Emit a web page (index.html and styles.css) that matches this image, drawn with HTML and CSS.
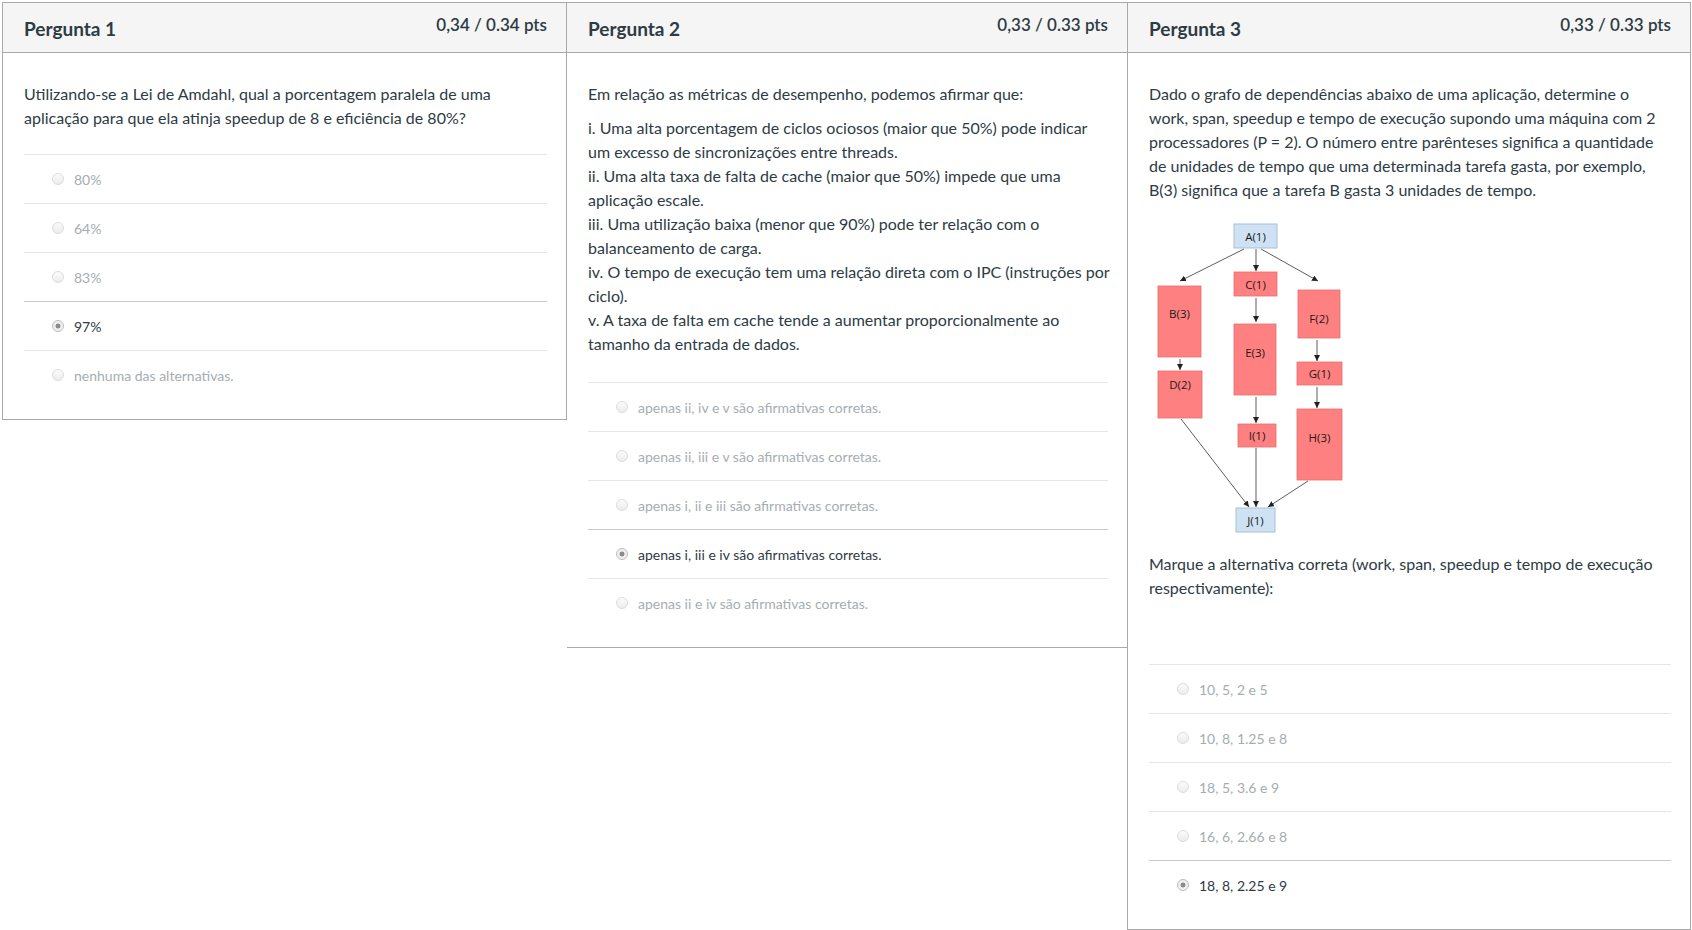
FILE: index.html
```html
<!DOCTYPE html>
<html lang="pt-BR">
<head>
<meta charset="utf-8">
<title>Quiz</title>
<link rel="stylesheet" href="styles.css">
</head>
<body>
<div class="quiz">
  <section class="q q1">
    <header class="q-head">
      <h2 class="q-title">Pergunta 1</h2>
      <span class="pts">0,34 / 0.34 pts</span>
    </header>
    <div class="q-body">
      <div class="q-text">
        <p>Utilizando-se a Lei de Amdahl, qual a porcentagem paralela de uma aplicação para que ela atinja speedup de 8 e eficiência de 80%?</p>
      </div>
      <ul class="answers">
        <li class="ans"><span class="radio"></span><span>80%</span></li>
        <li class="ans"><span class="radio"></span><span>64%</span></li>
        <li class="ans"><span class="radio"></span><span>83%</span></li>
        <li class="ans selected"><span class="radio"></span><span>97%</span></li>
        <li class="ans"><span class="radio"></span><span>nenhuma das alternativas.</span></li>
      </ul>
    </div>
  </section>

  <section class="q q2">
    <header class="q-head">
      <h2 class="q-title">Pergunta 2</h2>
      <span class="pts">0,33 / 0.33 pts</span>
    </header>
    <div class="q-body">
      <div class="q-text">
        <p class="intro">Em relação as métricas de desempenho, podemos afirmar que:</p>
        <p>i. Uma alta porcentagem de ciclos ociosos (maior que 50%) pode indicar um excesso de sincronizações entre threads.<br>
        ii. Uma alta taxa de falta de cache (maior que 50%) impede que uma aplicação escale.<br>
        iii. Uma utilização baixa (menor que 90%) pode ter relação com o balanceamento de carga.<br>
        iv. O tempo de execução tem uma relação direta com o IPC (instruções por ciclo).<br>
        v. A taxa de falta em cache tende a aumentar proporcionalmente ao tamanho da entrada de dados.</p>
      </div>
      <ul class="answers answers-mid">
        <li class="ans"><span class="radio"></span><span>apenas ii, iv e v são afirmativas corretas.</span></li>
        <li class="ans"><span class="radio"></span><span>apenas ii, iii e v são afirmativas corretas.</span></li>
        <li class="ans"><span class="radio"></span><span>apenas i, ii e iii são afirmativas corretas.</span></li>
        <li class="ans selected"><span class="radio"></span><span>apenas i, iii e iv são afirmativas corretas.</span></li>
        <li class="ans"><span class="radio"></span><span>apenas ii e iv são afirmativas corretas.</span></li>
      </ul>
    </div>
  </section>

  <section class="q q3">
    <header class="q-head">
      <h2 class="q-title">Pergunta 3</h2>
      <span class="pts">0,33 / 0.33 pts</span>
    </header>
    <div class="q-body">
      <div class="q-text">
        <p>Dado o grafo de dependências abaixo de uma aplicação, determine o<br>
        work, span, speedup e tempo de execução supondo uma máquina com 2<br>
        processadores (P = 2). O número entre parênteses significa a quantidade<br>
        de unidades de tempo que uma determinada tarefa gasta, por exemplo,<br>
        B(3) significa que a tarefa B gasta 3 unidades de tempo.</p>
        <div class="graph-wrap">
          <svg class="graph" width="200" height="320" viewBox="0 0 200 320" xmlns="http://www.w3.org/2000/svg">
            <defs>
              <marker id="ah" viewBox="0 0 10 10" refX="10" refY="5" markerUnits="userSpaceOnUse" markerWidth="6" markerHeight="6" orient="auto">
                <path d="M0,0 L10,5 L0,10 z" fill="#222"/>
              </marker>
            </defs>
            <g stroke="#333" stroke-width="0.8" fill="none" marker-end="url(#ah)">
              <line x1="94" y1="30" x2="30" y2="62"/>
              <line x1="106" y1="30" x2="106" y2="52"/>
              <line x1="111" y1="30" x2="168" y2="62"/>
              <line x1="106" y1="79" x2="106" y2="103"/>
              <line x1="30" y1="140" x2="30" y2="151"/>
              <line x1="106" y1="178" x2="106" y2="204"/>
              <line x1="167" y1="121" x2="167" y2="142"/>
              <line x1="167" y1="168" x2="167" y2="189"/>
              <line x1="31" y1="200" x2="99" y2="288"/>
              <line x1="106" y1="229" x2="106" y2="288"/>
              <line x1="158" y1="262" x2="118" y2="288"/>
            </g>
            <g class="node-blue">
              <rect x="84" y="5" width="43" height="24"/>
              <rect x="86" y="289" width="39" height="24"/>
            </g>
            <g class="node-red">
              <rect x="84" y="53" width="43" height="24"/>
              <rect x="8" y="67" width="43" height="71"/>
              <rect x="8" y="152" width="44" height="47"/>
              <rect x="84" y="105" width="42" height="71"/>
              <rect x="88" y="205" width="38" height="23"/>
              <rect x="148" y="71" width="42" height="48"/>
              <rect x="147" y="143" width="45" height="23"/>
              <rect x="147" y="190" width="45" height="71"/>
            </g>
            <g class="node-label">
              <text x="105.5" y="17">A(1)</text>
              <text x="105.5" y="65">C(1)</text>
              <text x="29.5" y="94">B(3)</text>
              <text x="30" y="165">D(2)</text>
              <text x="105" y="133">E(3)</text>
              <text x="107" y="216.5">I(1)</text>
              <text x="169" y="99">F(2)</text>
              <text x="169.5" y="154.5">G(1)</text>
              <text x="169.5" y="218">H(3)</text>
              <text x="105.5" y="301">J(1)</text>
            </g>
          </svg>
        </div>
        <p class="mark">Marque a alternativa correta (work, span, speedup e tempo de execução respectivamente):</p>
      </div>
      <ul class="answers answers-far">
        <li class="ans"><span class="radio"></span><span>10, 5, 2 e 5</span></li>
        <li class="ans"><span class="radio"></span><span>10, 8, 1.25 e 8</span></li>
        <li class="ans"><span class="radio"></span><span>18, 5, 3.6 e 9</span></li>
        <li class="ans"><span class="radio"></span><span>16, 6, 2.66 e 8</span></li>
        <li class="ans selected"><span class="radio"></span><span>18, 8, 2.25 e 9</span></li>
      </ul>
    </div>
  </section>
</div>
</body>
</html>
```

FILE: styles.css
```css
html, body {
  margin: 0;
  padding: 0;
  background: #ffffff;
}

body {
  font-family: Lato, "Noto Sans", "Liberation Sans", sans-serif;
  color: #2d3b45;
}

.quiz {
  display: flex;
  align-items: flex-start;
  padding: 2px 0 0 2px;
}

.q {
  box-sizing: border-box;
  border: 1px solid #a9a9a9;
  background: #ffffff;
}

.q1 {
  width: 565px;
}

.q2 {
  width: 561px;
  border-left: none;
}

.q3 {
  width: 564px;
  margin-left: -1px;
}

.q-head {
  box-sizing: border-box;
  height: 50px;
  padding: 10px 19px 0 21px;
  display: flex;
  justify-content: space-between;
  align-items: flex-start;
  background: #f5f5f5;
  border-bottom: 1px solid #a9a9a9;
}

.q-title {
  margin: 0;
  font-size: 19px;
  font-weight: 700;
  line-height: 31px;
  color: #2d3b45;
}

.pts {
  font-size: 17px;
  font-weight: 600;
  line-height: 24px;
  color: #2d3b45;
}

.q-body {
  padding: 29px 19px 20px 21px;
}

.q-text {
  font-size: 16px;
  line-height: 24px;
  margin-right: -4px;
}

.q-text p {
  margin: 0;
}

.q-text .intro {
  margin-bottom: 10px;
}

.graph-wrap {
  padding-left: 1px;
  margin: 17px 0 13px;
}

.graph {
  display: block;
}

.node-blue rect {
  fill: #cfe2f3;
  stroke: #a9bfd3;
  stroke-width: 1;
}

.node-red rect {
  fill: #ff8080;
  stroke: #e66f6f;
  stroke-width: 0.8;
}

.node-label text {
  font-family: "Open Sans", "Liberation Sans", sans-serif;
  font-size: 11.5px;
  fill: #1a1a1a;
  text-anchor: middle;
  dominant-baseline: central;
}

.answers {
  list-style: none;
  margin: 24px 0 0;
  padding: 0;
}

.answers-mid {
  margin-top: 26px;
}

.answers-far {
  margin-top: 64px;
}

.ans {
  box-sizing: border-box;
  height: 49px;
  display: flex;
  align-items: center;
  gap: 10px;
  padding-left: 28px;
  border-top: 1px solid #e6e6e6;
  font-size: 14px;
  color: #a6adb2;
}

.ans.selected {
  border-top-color: #c8c8c8;
  color: #2d3b45;
}

.radio {
  box-sizing: border-box;
  width: 12px;
  height: 12px;
  flex: none;
  border-radius: 50%;
  border: 1px solid #dcdcdc;
  background: linear-gradient(#fbfbfb, #ececec);
}

.ans.selected .radio {
  border-color: #bdbdbd;
  background: radial-gradient(circle, #8c8c8c 0, #8c8c8c 2.2px, #efefef 2.8px);
}
```
